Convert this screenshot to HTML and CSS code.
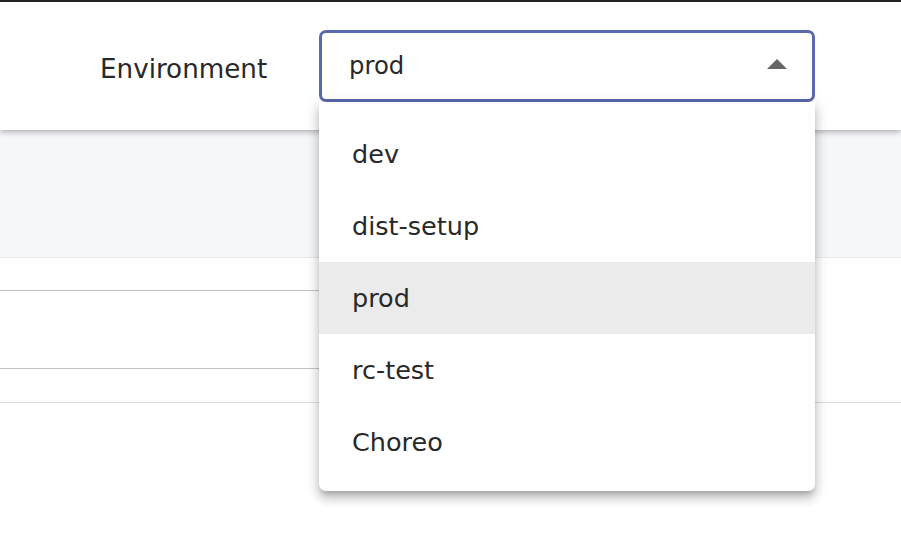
FILE: index.html
```html
<!DOCTYPE html>
<html lang="en">
<head>
<meta charset="utf-8">
<title>Environment</title>
<link rel="stylesheet" href="styles.css">
</head>
<body>
<div class="page">
  <header class="topbar">
    <span class="label">Environment</span>
    <div class="select-wrap">
      <div class="select">
        <span class="value">prod</span>
        <svg class="caret" width="20" height="10" viewBox="0 0 20 10"><path d="M0 10 L10 0 L20 10 Z" fill="#666"/></svg>
      </div>
      <ul class="menu">
        <li class="item">dev</li>
        <li class="item">dist-setup</li>
        <li class="item selected">prod</li>
        <li class="item">rc-test</li>
        <li class="item">Choreo</li>
      </ul>
    </div>
  </header>
  <main class="content">
    <div class="thead"></div>
    <div class="row r1"></div>
    <div class="row r2"></div>
    <div class="row r3"></div>
  </main>
</div>
</body>
</html>
```
FILE: styles.css
```css
html, body {
  margin: 0;
  padding: 0;
  background: #fff;
}
body {
  font-family: "DejaVu Sans", "Noto Sans", sans-serif;
  color: #282828;
}
.page {
  border-top: 2px solid #232323;
  height: 554px;
  overflow: hidden;
}
.topbar {
  position: relative;
  z-index: 2;
  height: 128px;
  background: #fff;
  box-shadow: 0 2px 6px rgba(0, 0, 0, 0.3);
  display: flex;
  align-items: flex-start;
  padding-left: 100px;
}
.label {
  font-size: 26.2px;
  line-height: 30px;
  margin-top: 52px;
  width: 219px;
}
.select-wrap {
  position: relative;
  margin-top: 28px;
}
.select {
  box-sizing: border-box;
  width: 496px;
  height: 72px;
  border: 3px solid #5a68ad;
  border-radius: 7px;
  display: flex;
  align-items: center;
  justify-content: space-between;
  padding: 0 25px 0 27px;
  background: #fff;
}
.value {
  font-size: 24.3px;
  line-height: 28px;
  margin-top: -1px;
}
.caret {
  display: block;
  margin-top: -4px;
}
.menu {
  position: absolute;
  left: 0;
  top: 72px;
  width: 496px;
  box-sizing: border-box;
  margin: 0;
  padding: 16px 0 13px;
  list-style: none;
  background: #fff;
  border-radius: 0 0 7px 7px;
  box-shadow: 0 5px 5px -3px rgba(0,0,0,0.2), 0 8px 10px 1px rgba(0,0,0,0.14), 0 3px 14px 2px rgba(0,0,0,0.12);
}
.item {
  height: 72px;
  display: flex;
  align-items: center;
  padding-left: 33px;
  font-size: 25.5px;
}
.item.selected {
  background: #ebebeb;
}
.content {
  position: relative;
  z-index: 1;
}
.thead {
  height: 127px;
  background: #f6f7fa;
  border-bottom: 1px solid #e8e8ec;
}
.row {
  box-sizing: border-box;
}
.r1 {
  height: 33px;
  width: 600px;
  border-bottom: 1px solid #c4c4c4;
}
.r2 {
  height: 78px;
  width: 600px;
  border-bottom: 1px solid #c4c4c4;
}
.r3 {
  height: 34px;
  border-bottom: 1px solid #dcdcdc;
}
```
